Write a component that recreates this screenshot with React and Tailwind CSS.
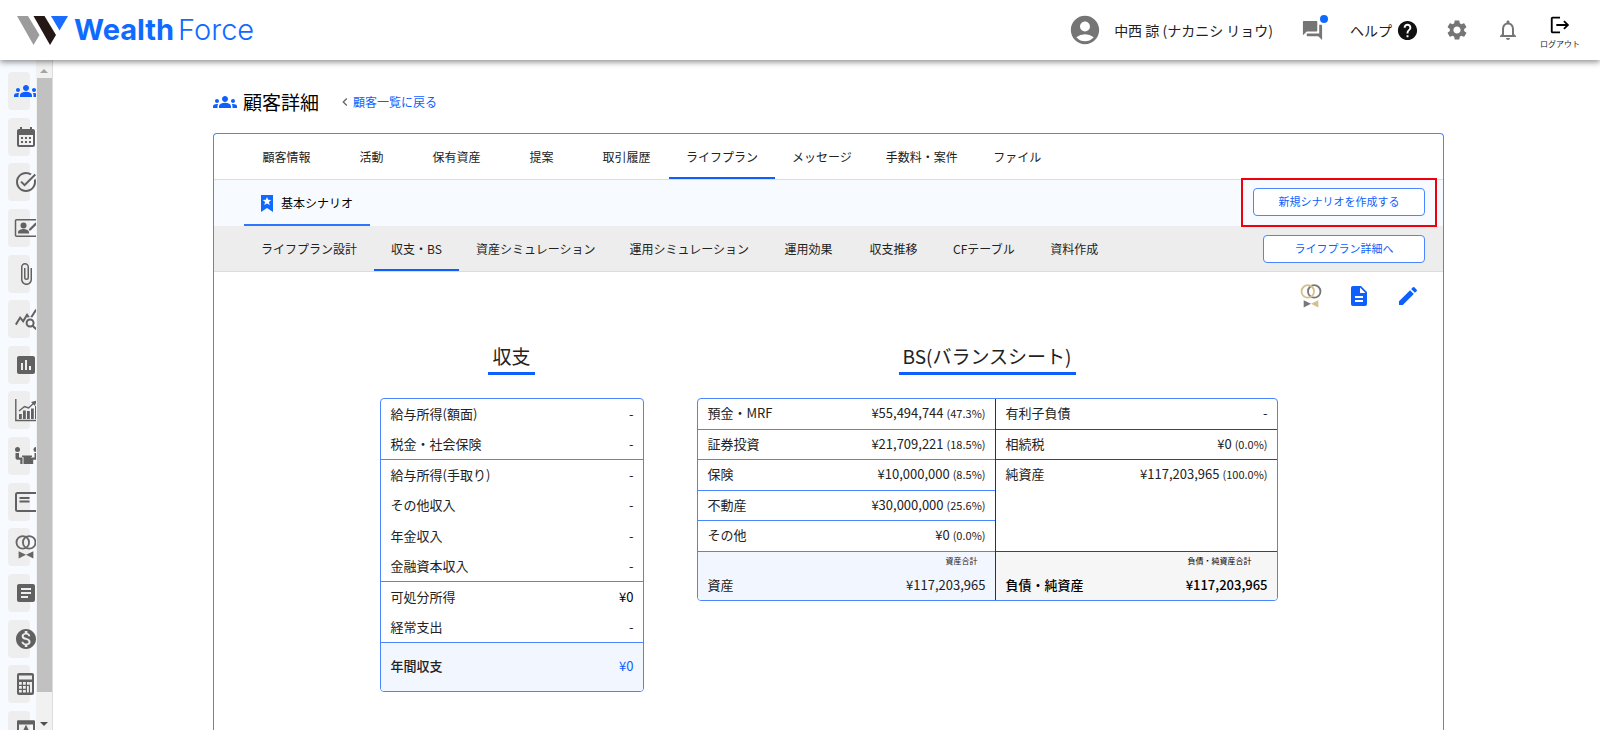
import {
    MdAccountCircle,
    MdArticle,
    MdAttachFile,
    MdCalendarMonth,
    MdChevronLeft,
    MdDescription,
    MdEdit,
    MdGroups,
    MdHelp,
    MdInsertChart,
    MdLogout,
    MdMonetizationOn,
    MdNotificationsNone,
    MdQueryStats,
    MdQuestionAnswer,
    MdSettings,
    MdTaskAlt,
} from "react-icons/md";

const Rings = ({ left = "#666", right = "#666", className }) => (
    <svg viewBox="0 0 24 26" fill="none" className={className}>
        <circle cx="15.5" cy="8" r="6.8" stroke={right} strokeWidth="2" />
        <circle cx="8.5" cy="8" r="6.8" stroke={left} strokeWidth="2" />
        <path d="M4 17.500v8l8-4z" fill={right} />
        <path d="M20 17.500v8l-8-4z" fill={left} />
    </svg>
);

const ContactEdit = ({ className }) => (
    <svg viewBox="0 0 24 24" fill="none" className={className}>
        <path d="M25 3.8H2.5a1 1 0 0 0-1 1v14.4a1 1 0 0 0 1 1H25" stroke="currentColor" strokeWidth="1.5" />
        <circle cx="9.5" cy="9.5" r="3" fill="currentColor" />
        <path d="M4 17.5v-1.4c0-2 3.6-3.1 5.5-3.1s5.5 1.1 5.5 3.1v1.4z" fill="currentColor" />
        <path d="M15 13l6.500-6.500 1.600 1.600-6.500 6.500H15z" fill="currentColor" />
    </svg>
);

const GrowthChart = ({ className }) => (
    <svg viewBox="0 0 24 24" fill="none" className={className}>
        <path d="M1.8 1v21.5H24" stroke="currentColor" strokeWidth="1.4" />
        <path
            d="M5 21v-5h2.800v5zM9 21v-8.500h2.800V21zM13 21v-8h2.800v8zM17 21V10.500h2.800V21zM21 21V8h2.800v13z"
            fill="currentColor"
        />
        <path d="M5 13l5.500-4.500 4 1.500L20 5" stroke="currentColor" strokeWidth="1.4" />
        <path d="M17 4l5.500-1.500L21 8z" fill="currentColor" />
    </svg>
);

const Meeting = ({ className }) => (
    <svg viewBox="0 0 24 24" fill="currentColor" className={className}>
        <circle cx="3.5" cy="5.5" r="2.5" />
        <circle cx="22" cy="5.5" r="2.5" />
        <path d="M1.500 9h3.500v4.500h3.500V20H6.300v-4.300H3.500a2 2 0 0 1-2-2zM24 9h-3.500v4.500H17V20h2.200v-4.300H22a2 2 0 0 0 2-2z" />
        <path d="M8 11.500h10V13h-1v7H9.500v-7H8z" />
    </svg>
);

const Card = ({ className }) => (
    <svg viewBox="0 0 24 24" fill="none" stroke="currentColor" strokeWidth="2" className={className}>
        <path d="M25 3H3.500A1.500 1.500 0 0 0 2 4.500v15A1.500 1.500 0 0 0 3.500 21H25" />
        <path d="M5.500 8h10M5.500 11.500h10" />
    </svg>
);

const Calculator = ({ className }) => (
    <svg viewBox="0 0 24 24" fill="none" className={className}>
        <rect x="3" y="1" width="17" height="22" rx="2" fill="currentColor" />
        <path d="M5 3.500h13v4H5z" fill="#eee" />
        <path
            d="M5 10h2.800v2.800H5zM9 10h2.800v2.800H9zM13 10h2.800v2.800H13zM5 14h2.800v2.800H5zM9 14h2.800v2.800H9zM13 14h1.800v6.500H13zM16 10h2v10.500h-2zM5 18h2.800v2.500H5zM9 18h2.800v2.500H9z"
            fill="#eee"
        />
    </svg>
);

const Board = ({ className }) => (
    <svg viewBox="0 0 24 24" fill="none" stroke="currentColor" strokeWidth="2" className={className}>
        <path d="M4 3.500h16v17H4z" />
        <path d="M4 4.500h16" strokeWidth="4" />
        <path d="M12 9l-3 6h6z" />
    </svg>
);

const menus = [
    { label: "顧客", Icon: MdGroups },
    { label: "カレンダー", Icon: MdCalendarMonth },
    { label: "タスク", Icon: MdTaskAlt },
    { label: "顧客編集", Icon: ContactEdit },
    { label: "ファイル", Icon: MdAttachFile },
    { label: "分析", Icon: MdQueryStats },
    { label: "レポート", Icon: MdInsertChart },
    { label: "実績", Icon: GrowthChart },
    { label: "面談", Icon: Meeting },
    { label: "カード", Icon: Card },
    { label: "ライフイベント", Icon: Rings },
    { label: "記事", Icon: MdArticle },
    { label: "手数料", Icon: MdMonetizationOn },
    { label: "計算", Icon: Calculator },
    { label: "ボード", Icon: Board },
];

const mainTabs = ["顧客情報", "活動", "保有資産", "提案", "取引履歴", "ライフプラン", "メッセージ", "手数料・案件", "ファイル"];

const planTabs = [
    "ライフプラン設計",
    "収支・BS",
    "資産シミュレーション",
    "運用シミュレーション",
    "運用効果",
    "収支推移",
    "CFテーブル",
    "資料作成",
];

const incomes = [
    { name: "給与所得(額面)", value: "-" },
    { name: "税金・社会保険", value: "-", line: true },
    { name: "給与所得(手取り)", value: "-" },
    { name: "その他収入", value: "-" },
    { name: "年金収入", value: "-" },
    { name: "金融資本収入", value: "-", line: true },
    { name: "可処分所得", value: "¥0", strong: true },
    { name: "経常支出", value: "-", line: true },
];

const assets = [
    { name: "預金・MRF", value: "¥55,494,744", rate: "(47.3%)" },
    { name: "証券投資", value: "¥21,709,221", rate: "(18.5%)" },
    { name: "保険", value: "¥10,000,000", rate: "(8.5%)" },
    { name: "不動産", value: "¥30,000,000", rate: "(25.6%)" },
    { name: "その他", value: "¥0", rate: "(0.0%)" },
];

const debts = [
    { name: "有利子負債", value: "-" },
    { name: "相続税", value: "¥0", rate: "(0.0%)" },
];

const Logo = () => (
    <a href="#" className="flex items-center gap-1.5 text-[#0f6bff]">
        <svg viewBox="0 0 51 29" className="h-[29px] w-[51px]">
            <path d="M0 0h11l11.500 19-6 10z" fill="#9c9c9c" />
            <path d="M16.500 0h11L39 19l-6 10z" fill="#231815" />
            <path d="M34 0h17l-8.500 14.500z" fill="#1a6dff" />
        </svg>
        <span className="flex gap-1 font-[Inter,sans-serif] text-[29px] leading-8">
            <span className="font-bold">Wealth</span>
            <span className="font-light">Force</span>
        </span>
    </a>
);

const Header = () => (
    <header className="relative z-10 flex h-[60px] shrink-0 items-center justify-between bg-white pr-5 pl-[17px] shadow-[0_2px_6px_rgba(0,0,0,0.45)]">
        <Logo />
        <div className="flex items-center text-sm text-[#222]">
            <MdAccountCircle className="mr-3 size-[34px] text-[#757575]" />
            <span>中西 諒 (ナカニシ リョウ)</span>
            <button aria-label="メッセージ" className="relative ml-7 text-[#757575]">
                <MdQuestionAnswer className="size-[23px]" />
                <span className="absolute -top-1 -right-1 size-2 rounded-full bg-[#0f6bff]" />
            </button>
            <a href="#" className="ml-6.5 flex items-center gap-1">
                ヘルプ
                <MdHelp className="size-[23px] text-[#111]" />
            </a>
            <button aria-label="設定" className="ml-6.5 text-[#757575]">
                <MdSettings className="size-6" />
            </button>
            <button aria-label="お知らせ" className="ml-[27px] text-[#757575]">
                <MdNotificationsNone className="size-6" />
            </button>
            <button className="ml-5 flex flex-col items-center text-[8px] leading-3">
                <MdLogout className="mt-1 mb-0.5 size-[22px] text-black" />
                ログアウト
            </button>
        </div>
    </header>
);

const Sidebar = () => (
    <aside className="flex w-[53px] shrink-0 overflow-hidden border-r border-[#ddd] bg-[#f7faff]">
        <nav className="w-9 shrink-0 overflow-hidden pt-3 pl-2">
            <div className="flex h-[677px] flex-col justify-between">
                {menus.map(({ label, Icon }, i) => (
                    <button
                        key={label}
                        aria-label={label}
                        className={`flex h-[38px] w-[22px] shrink-0 items-center rounded-sm bg-[#eee] pl-1.5 ${i === 0 ? "text-[#0f5fff]" : "text-[#616161]"}`}
                    >
                        <Icon className="size-6 shrink-0" />
                    </button>
                ))}
            </div>
        </nav>
        <div className="flex flex-1 flex-col items-center bg-[#f1f1f1]">
            <span className="flex h-[18px] items-center pt-1 text-[#a3a3a3]">
                <svg viewBox="0 0 8 4" className="h-1 w-2" fill="currentColor">
                    <path d="M0 4l4-4 4 4z" />
                </svg>
            </span>
            <div className="w-[15px] flex-1 bg-[#c1c1c1]" />
            <span className="flex h-[38px] items-end pb-1 text-[#505050]">
                <svg viewBox="0 0 8 4" className="h-1 w-2" fill="currentColor">
                    <path d="M0 0l4 4 4-4z" />
                </svg>
            </span>
        </div>
    </aside>
);

const Tabs = ({ items, active }) => (
    <div role="tablist" className="flex h-full">
        {items.map((item) => (
            <button
                key={item}
                role="tab"
                aria-selected={item === active}
                className={`min-w-[85px] border-b-2 px-[17px] pt-0.5 text-xs whitespace-nowrap ${item === active ? "border-[#0f5fff]" : "border-transparent"}`}
            >
                {item}
            </button>
        ))}
    </div>
);

const OutlineButton = ({ children, className }) => (
    <button
        className={`h-7 rounded border border-[#4a86ff] bg-white text-[11px] text-[#0f5fff] ${className}`}
    >
        {children}
    </button>
);

const SectionTitle = ({ children }) => (
    <h2 className="mb-[23px] border-b-3 border-[#0f5fff] px-1 pt-0.5 text-[19px] leading-8">{children}</h2>
);

const Row = ({ item, border }) => (
    <tr className="odd:h-[31px] even:h-[30px]">
        <th className={`pb-0.5 pl-[10px] text-left font-normal ${border}`}>{item.name}</th>
        <td className={`pr-[9px] pb-0.5 text-right ${item.strong ? "text-black" : ""} ${border}`}>
            {item.value}
            {item.rate && <span className="ml-[3px] text-[11px]">{item.rate}</span>}
        </td>
    </tr>
);

const IncomeTable = () => (
    <div className="overflow-hidden rounded border border-[#4a86ff]">
        <table className="w-[262px] border-separate border-spacing-0 text-[13px] leading-5">
            <tbody>
                {incomes.map((item) => (
                    <Row key={item.name} item={item} border={item.line ? "border-b border-[#4a86ff]" : ""} />
                ))}
                <tr className="h-12 bg-[#f2f6ff]">
                    <th className="pb-0.5 pl-[10px] text-left font-medium">年間収支</th>
                    <td className="pr-[9px] pb-0.5 text-right text-[#0f5fff]">¥0</td>
                </tr>
            </tbody>
        </table>
    </div>
);

const BalanceSheet = () => (
    <div className="flex overflow-hidden rounded border border-[#4a86ff] text-[13px] leading-5">
        <table className="w-[297px] border-separate border-spacing-0">
            <tbody>
                {assets.map((item) => (
                    <Row key={item.name} item={item} border="border-b border-[#4a86ff]" />
                ))}
                <tr className="h-12 bg-[#f2f6ff]">
                    <th className="pb-[5px] pl-[10px] text-left align-bottom font-normal">資産</th>
                    <td className="pr-[9px] pb-[5px] text-right align-bottom">
                        <div className="mr-2 mb-2 text-[8px] leading-3">資産合計</div>
                        ¥117,203,965
                    </td>
                </tr>
            </tbody>
        </table>
        <table className="w-[282px] border-separate border-spacing-0 border-l border-[#333]">
            <tbody>
                {debts.map((item) => (
                    <Row key={item.name} item={item} border="border-b border-[#444]" />
                ))}
                <tr className="h-[92px]">
                    <th className="border-b border-[#444] pt-1 pl-[10px] text-left align-top font-normal">純資産</th>
                    <td className="border-b border-[#444] pt-1 pr-[9px] text-right align-top">
                        ¥117,203,965<span className="ml-[3px] text-[11px]">(100.0%)</span>
                    </td>
                </tr>
                <tr className="h-12 bg-[#f6f6f6] text-black">
                    <th className="pb-[5px] pl-[10px] text-left align-bottom font-medium">負債・純資産</th>
                    <td className="pr-[9px] pb-[5px] text-right align-bottom font-medium">
                        <div className="mr-4 mb-2 text-[8px] leading-3 font-normal">負債・純資産合計</div>
                        ¥117,203,965
                    </td>
                </tr>
            </tbody>
        </table>
    </div>
);

const App = () => {
    return (
        <div className="flex h-screen flex-col overflow-hidden bg-white font-['Noto_Sans_CJK_JP',sans-serif] text-[#222]">
            <Header />
            <div className="flex min-h-0 flex-1">
                <Sidebar />
                <main className="flex min-w-0 flex-1 flex-col pt-6 pr-[156px] pl-40">
                    <div className="flex h-9 items-center">
                        <MdGroups className="size-6 text-[#0f5fff]" />
                        <h1 className="ml-1.5 text-[19px] text-black">顧客詳細</h1>
                        <a href="#" className="ml-[18px] flex items-center text-xs text-[#0f5fff]">
                            <MdChevronLeft className="size-4 text-[#666]" />
                            顧客一覧に戻る
                        </a>
                    </div>
                    <section className="mt-[13px] flex-1 rounded-t border border-b-0 border-[#4a86ff]">
                        <div className="h-[46px] border-b border-[#ddd] px-[30px]">
                            <Tabs items={mainTabs} active="ライフプラン" />
                        </div>
                        <div className="flex h-[46px] justify-between bg-[#f7faff] pr-1.5 pl-[30px]">
                            <button className="flex h-full items-center gap-2 border-b-2 border-[#2f74ff] px-[17px] pt-0.5 text-xs text-black">
                                <svg viewBox="0 0 12 17" className="h-[17px] w-3">
                                    <path d="M0 0h12v17l-6-4-6 4z" fill="#0f6bff" />
                                    <path d="M6 2l1.200 2.800 3 .2-2.300 2 .8 3L6 8.400 3.300 10l.8-3-2.300-2 3-.2z" fill="#fff" />
                                </svg>
                                基本シナリオ
                            </button>
                            <div className="relative z-10 -my-0.5 flex h-[49px] items-center border-2 border-[#f0000c] px-2.5 pb-0.5">
                                <OutlineButton className="w-[172px]">新規シナリオを作成する</OutlineButton>
                            </div>
                        </div>
                        <div className="flex h-[46px] items-center justify-between border-b border-[#ddd] bg-[#ededed] pr-[18px] pl-[30px]">
                            <Tabs items={planTabs} active="収支・BS" />
                            <OutlineButton className="w-[162px]">ライフプラン詳細へ</OutlineButton>
                        </div>
                        <div className="flex h-12 items-center justify-end gap-[25px] pr-[23px] text-[#0f5fff]">
                            <button aria-label="ライフイベント">
                                <Rings left="#d6bf8c" right="#777" className="h-6 w-[22px]" />
                            </button>
                            <button aria-label="資料">
                                <MdDescription className="size-6" />
                            </button>
                            <button aria-label="編集">
                                <MdEdit className="size-6" />
                            </button>
                        </div>
                        <div className="flex items-start justify-center gap-[53px] pt-[18px]">
                            <div className="flex flex-col items-center">
                                <SectionTitle>収支</SectionTitle>
                                <IncomeTable />
                            </div>
                            <div className="flex flex-col items-center">
                                <SectionTitle>BS(バランスシート)</SectionTitle>
                                <BalanceSheet />
                            </div>
                        </div>
                    </section>
                </main>
            </div>
        </div>
    );
};

export default App;
